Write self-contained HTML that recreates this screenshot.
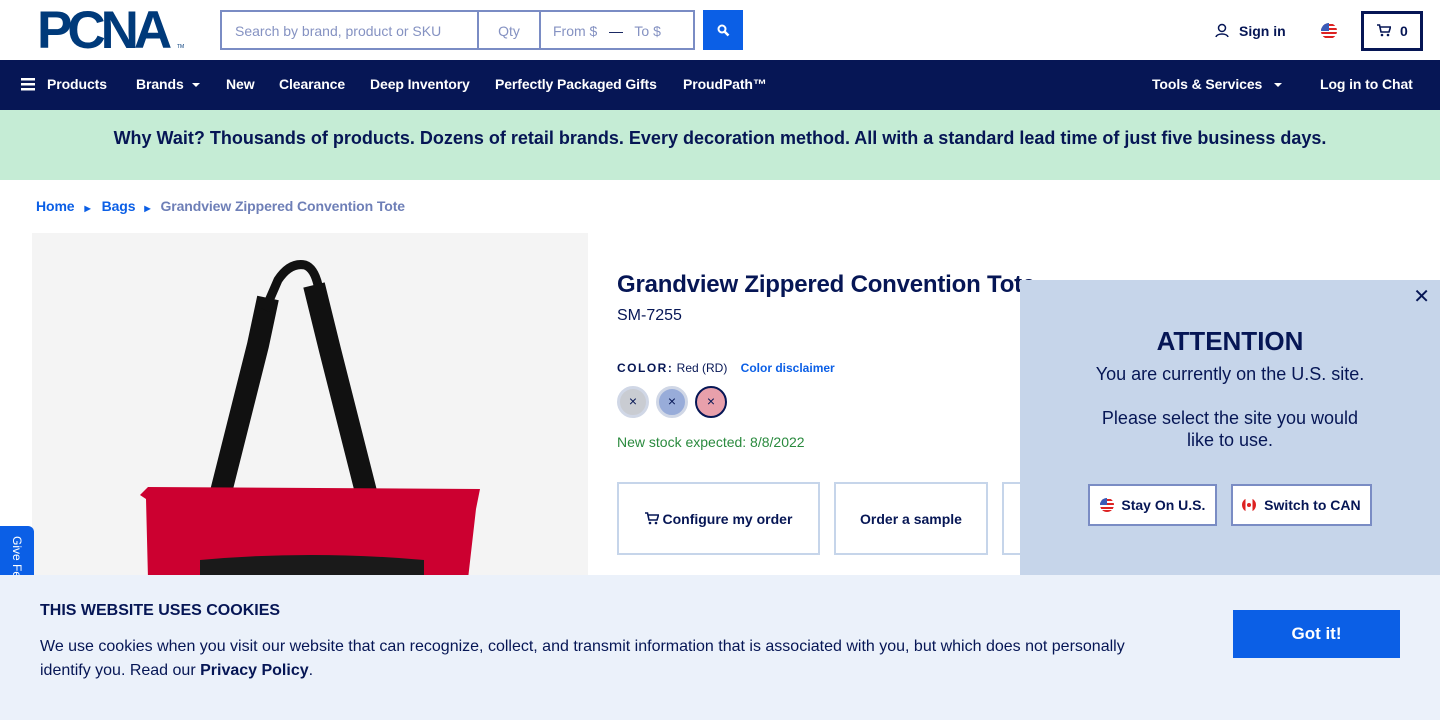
<!DOCTYPE html>
<html><head><meta charset="utf-8"><style>
*{box-sizing:border-box;margin:0;padding:0}
body{width:1440px;height:720px;overflow:hidden;position:relative;font-family:"Liberation Sans",Arial,sans-serif;background:#fff;color:#061655}
.abs{position:absolute}
.nav{top:60px;left:0;width:1440px;height:50px;background:#061655;color:#fff;font-weight:bold;font-size:14px}
.nav span{position:absolute;top:16px;letter-spacing:-0.1px}
.caret{display:inline-block;width:0;height:0;border-left:4px solid transparent;border-right:4px solid transparent;border-top:4px solid #fff;margin-left:8px;vertical-align:middle}
.inp{top:10px;height:40px;border:2px solid #7a8cc4;color:#8592c2;font-size:14px;padding-top:11px}
.btn{border:2px solid #c6d5ea;background:#fff;font-weight:bold;font-size:14px;text-align:center;color:#061655}
.sw{width:32px;height:32px;border-radius:50%;border:3px solid #d0d7e6;top:386px;font-size:14px;text-align:center;line-height:24px}
</style></head><body>
<div class="abs" style="left:37px;top:10px;font-family:'Liberation Sans';font-weight:900;font-size:53px;letter-spacing:-5px;color:#003a7a;line-height:42px">PCNA</div>
<div class="abs" style="left:177px;top:44px;font-size:5px;color:#003a7a">TM</div>
<div class="abs inp" style="left:220px;width:259px;padding-left:13px">Search by brand, product or SKU</div>
<div class="abs inp" style="left:477px;width:64px;text-align:center">Qty</div>
<div class="abs inp" style="left:539px;width:156px;padding-left:12px">From $ &nbsp;&nbsp;<span style="color:#061655">—</span>&nbsp;&nbsp; To $</div>
<div class="abs" style="left:703px;top:10px;width:40px;height:40px;background:#0b5fe6">
<svg width="40" height="40" viewBox="0 0 40 40"><circle cx="19" cy="19" r="3.5" fill="none" stroke="#fff" stroke-width="2"/><path d="M21.5 21.5l4 4" stroke="#fff" stroke-width="2.5"/></svg></div>
<svg class="abs" style="left:1215px;top:23px" width="14" height="15" viewBox="0 0 14 15"><circle cx="7" cy="5" r="3.5" fill="none" stroke="#061655" stroke-width="1.5"/><path d="M1 14c1-4 11-4 12 0" fill="none" stroke="#061655" stroke-width="1.5"/></svg>
<div class="abs" style="left:1239px;top:23px;font-weight:bold;font-size:14px">Sign in</div>
<svg class="abs" style="left:1321px;top:23px" width="16" height="16" viewBox="0 0 16 16"><clipPath id="c"><circle cx="8" cy="8" r="8"/></clipPath><g clip-path="url(#c)"><rect width="16" height="16" fill="#fff"/><rect y="1" width="16" height="2" fill="#d22"/><rect y="5" width="16" height="2" fill="#d22"/><rect y="9" width="16" height="2" fill="#d22"/><rect y="13" width="16" height="2" fill="#d22"/><rect width="8" height="8" fill="#3a5bb8"/></g></svg>
<div class="abs" style="left:1361px;top:11px;width:62px;height:40px;border:3px solid #061655"></div>
<svg class="abs" style="left:1377px;top:24px" width="14" height="13" viewBox="0 0 14 13"><path d="M0 1h2.5l1.5 7h8l1.5-5H3.5" fill="none" stroke="#061655" stroke-width="1.6"/><circle cx="5" cy="11" r="1.3" fill="#061655"/><circle cx="11" cy="11" r="1.3" fill="#061655"/></svg>
<div class="abs" style="left:1400px;top:23px;font-weight:bold;font-size:14px">0</div>

<div class="abs nav">
<svg class="abs" style="left:21px;top:18px" width="14" height="13"><rect y="0" width="14" height="2.5" fill="#fff"/><rect y="5" width="14" height="2.5" fill="#fff"/><rect y="10" width="14" height="2.5" fill="#fff"/></svg>
<span style="left:47px">Products</span><span style="left:136px">Brands<i class="caret"></i></span>
<span style="left:226px">New</span><span style="left:279px">Clearance</span><span style="left:370px">Deep Inventory</span>
<span style="left:495px">Perfectly Packaged Gifts</span><span style="left:683px">ProudPath™</span>
<span style="left:1152px">Tools &amp; Services<i class="caret" style="margin-left:12px"></i></span><span style="left:1320px">Log in to Chat</span>
</div>
<div class="abs" style="top:110px;left:0;width:1440px;height:70px;background:#c5ecd5;text-align:center;font-weight:bold;font-size:18px;padding-top:18px">Why Wait? Thousands of products. Dozens of retail brands. Every decoration method. All with a standard lead time of just five business days.</div>

<div class="abs" style="top:198px;left:36px;font-size:14px;font-weight:bold;color:#0b5fe6;letter-spacing:-0.1px">Home<span style="font-size:8px;margin:0 11px 0 10px">▶</span>Bags<span style="font-size:8px;margin:0 10px 0 9px">▶</span><span style="color:#6e7fb7">Grandview Zippered Convention Tote</span></div>

<div class="abs" style="left:32px;top:233px;width:556px;height:350px;background:#f4f4f4;overflow:hidden">
<svg width="556" height="350" viewBox="32 233 556 350">
<path d="M221 492 L258 345 L268 298" fill="none" stroke="#111" stroke-width="22"/>
<path d="M265 310 L278 280 Q290 262 305 265 Q314 268 318 285" fill="none" stroke="#111" stroke-width="9"/>
<path d="M314 285 L330 350 L366 492" fill="none" stroke="#111" stroke-width="22"/>
<path d="M140 495l8-8 332 2-4 20-8 70H148l-2-80z" fill="#cc0030"/>
<path d="M200 560q110-10 224 0v30H200z" fill="#1a1a1a"/>
</svg></div>
<div class="abs" style="left:0;top:526px;width:34px;height:60px;background:#0b5fe6;border-radius:0 6px 0 0"></div>
<div class="abs" style="left:10px;top:536px;color:#fff;font-size:12px;writing-mode:vertical-rl">Give Fe</div>

<div class="abs" style="left:617px;top:271px;font-size:24px;font-weight:bold;letter-spacing:-0.2px">Grandview Zippered Convention Tote</div>
<div class="abs" style="left:617px;top:307px;font-size:16px">SM-7255</div>
<div class="abs" style="left:617px;top:361px;font-size:12px"><b style="letter-spacing:1.5px">COLOR:</b> Red (RD) &nbsp;&nbsp;&nbsp;<b style="color:#0b5fe6">Color disclaimer</b></div>
<div class="abs sw" style="left:617px;background:#c9ccd2">×</div>
<div class="abs sw" style="left:656px;background:#98acd9">×</div>
<div class="abs sw" style="left:695px;background:#e8a0ab;border-color:#061655;border-width:2px;line-height:26px">×</div>
<div class="abs" style="left:617px;top:434px;font-size:14px;color:#2a8a3e">New stock expected: 8/8/2022</div>
<div class="abs btn" style="left:617px;top:482px;width:203px;height:73px;padding-top:27px"><svg width="14" height="13" viewBox="0 0 14 13" style="vertical-align:-1px"><path d="M0 1h2.5l1.5 7h8l1.5-5H3.5" fill="none" stroke="#061655" stroke-width="1.6"/><circle cx="5" cy="11" r="1.3" fill="#061655"/><circle cx="11" cy="11" r="1.3" fill="#061655"/></svg> Configure my order</div>
<div class="abs btn" style="left:834px;top:482px;width:154px;height:73px;padding-top:27px">Order a sample</div>
<div class="abs btn" style="left:1002px;top:482px;width:40px;height:73px"></div>

<div class="abs" style="left:1020px;top:280px;width:420px;height:300px;background:#c6d5ea;text-align:center">
<div class="abs" style="right:10px;top:7px;font-size:20px;line-height:20px">✕</div>
<div style="margin-top:46px;font-size:26px;font-weight:bold">ATTENTION</div>
<div style="font-size:18px;margin-top:6px;line-height:22px">You are currently on the U.S. site.<br><br>Please select the site you would<br>like to use.</div>
<div class="abs" style="left:68px;top:204px;width:129px;height:42px;background:#fff;border:2px solid #7a8cc4;font-weight:bold;font-size:14px;padding-top:11px"><svg width="14" height="14" style="vertical-align:-2px"><clipPath id="d"><circle cx="7" cy="7" r="7"/></clipPath><g clip-path="url(#d)"><rect width="14" height="14" fill="#fff"/><rect y="1" width="14" height="2" fill="#d22"/><rect y="5" width="14" height="2" fill="#d22"/><rect y="9" width="14" height="2" fill="#d22"/><rect y="12" width="14" height="2" fill="#d22"/><rect width="7" height="7" fill="#3a5bb8"/></g></svg>&nbsp; Stay On U.S.</div>
<div class="abs" style="left:211px;top:204px;width:141px;height:42px;background:#fff;border:2px solid #7a8cc4;font-weight:bold;font-size:14px;padding-top:11px"><svg width="14" height="14" style="vertical-align:-2px"><clipPath id="e"><circle cx="7" cy="7" r="7"/></clipPath><g clip-path="url(#e)"><rect width="14" height="14" fill="#fff"/><rect width="3.5" height="14" fill="#d22"/><rect x="10.5" width="3.5" height="14" fill="#d22"/><circle cx="7" cy="7" r="2" fill="#d22"/></g></svg>&nbsp; Switch to CAN</div>
</div>

<div class="abs" style="left:0;top:575px;width:1440px;height:145px;background:#ebf1fa">
<div class="abs" style="left:40px;top:27px;font-size:16px;font-weight:bold">THIS WEBSITE USES COOKIES</div>
<div class="abs" style="left:40px;top:60px;width:1110px;font-size:16px;line-height:24px">We use cookies when you visit our website that can recognize, collect, and transmit information that is associated with you, but which does not personally identify you. Read our <b>Privacy Policy</b>.</div>
<div class="abs" style="left:1233px;top:35px;width:167px;height:48px;background:#0b5fe6;color:#fff;font-weight:bold;font-size:17px;text-align:center;line-height:48px">Got it!</div>
</div>
</body></html>
